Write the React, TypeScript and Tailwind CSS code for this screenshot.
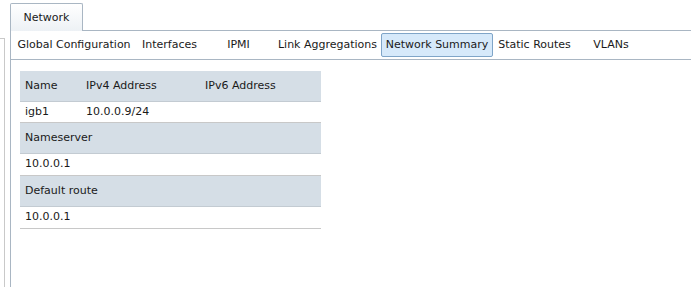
const subTabs = [
  { label: "Global Configuration", w: "w-[124px]" },
  { label: "Interfaces", w: "w-[67px]" },
  { label: "IPMI", w: "w-[71px]" },
  { label: "Link Aggregations", w: "w-[107px]" },
  { label: "Network Summary", w: "w-[112px]", active: true },
  { label: "Static Routes", w: "w-[83px]" },
  { label: "VLANs", w: "w-[70px]" },
];

function Band({ children }: { children: React.ReactNode }) {
  return (
    <div className="h-[31px] flex items-center bg-[#d5dee6] border-b border-[#c3cbd2] px-[5px]">
      {children}
    </div>
  );
}

function Row({ children, h = "h-[22px]" }: { children: React.ReactNode; h?: string }) {
  return <div className={`${h} flex items-center border-b border-[#c8c8c8] px-[5px]`}>{children}</div>;
}

export default function App() {
  return (
    <div className="w-[691px] h-[287px] bg-white overflow-hidden flex text-[11px] text-[#1a1a1a] font-['DejaVu_Sans',sans-serif]">
      {/* clipped side panel */}
      <div className="w-[5px] shrink-0 mt-[38px] border-t border-r border-[#c9c9c9]" />

      <div className="ml-[5px] flex-1 flex flex-col">
        {/* top tab */}
        <div className="flex h-[31px] pt-[3px]">
          <div className="w-[73px] border border-b-0 border-[#a9b6c3] rounded-t-[2px] bg-gradient-to-b from-white to-[#edf1f5] flex items-center justify-center pt-[1px]">
            Network
          </div>
          <div className="flex-1 border-b border-[#a9b6c3]" />
        </div>

        <div className="flex-1 border-l border-[#a9b6c3] flex flex-col">
          {/* sub tabs */}
          <div className="h-[29px] border-b border-[#a9b6c3] flex items-center pl-[1px]">
            {subTabs.map((t) => (
              <div
                key={t.label}
                className={
                  t.active
                    ? `${t.w} h-[24px] shrink-0 whitespace-nowrap flex items-center justify-center border border-[#7fa5c8] rounded-[2px] bg-[#d6e9fa]`
                    : `${t.w} h-[24px] shrink-0 whitespace-nowrap flex items-center justify-center border border-transparent`
                }
              >
                {t.label}
              </div>
            ))}
          </div>

          {/* summary table */}
          <div className="ml-[9px] mt-[11px] w-[301px]">
            <Band>
              <span className="w-[61px]">Name</span>
              <span className="w-[119px]">IPv4 Address</span>
              <span>IPv6 Address</span>
            </Band>
            <Row h="h-[21px]">
              <span className="w-[61px]">igb1</span>
              <span>10.0.0.9/24</span>
            </Row>
            <Band>Nameserver</Band>
            <Row>10.0.0.1</Row>
            <Band>Default route</Band>
            <Row>10.0.0.1</Row>
          </div>
        </div>
      </div>
    </div>
  );
}
